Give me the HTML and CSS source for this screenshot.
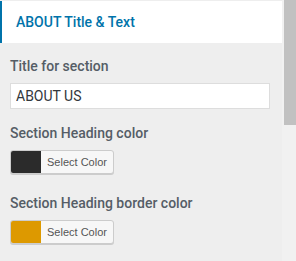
FILE: index.html
```html
<!DOCTYPE html>
<html lang="en">
<head>
  <meta charset="UTF-8">
  <title>Customizer - ABOUT Title &amp; Text</title>
  <link rel="stylesheet" href="styles.css">
</head>
<body>
  <div class="panel">
    <div class="section-title">
      <h3>ABOUT Title &amp; Text</h3>
    </div>

    <div class="controls">
      <div class="control">
        <label for="sectionTitle">Title for section</label>
        <input type="text" id="sectionTitle" value="ABOUT US">
      </div>

      <div class="control color-control">
        <label>Section Heading color</label>
        <button type="button" class="color-picker">
          <span class="swatch dark"></span>
          <span class="picker-text">Select Color</span>
        </button>
      </div>

      <div class="control color-control">
        <label>Section Heading border color</label>
        <button type="button" class="color-picker">
          <span class="swatch gold"></span>
          <span class="picker-text">Select Color</span>
        </button>
      </div>
    </div>
  </div>

  <div class="scrollbar">
    <div class="thumb"></div>
  </div>
</body>
</html>
```

FILE: styles.css
```css
body {
  margin: 0;
  font-family: Roboto, "Liberation Sans", sans-serif;
  background-color: #eeeeee;
  display: flex;
  height: 261px;
  overflow: hidden;
}
.panel {
  width: 282px;
  padding-top: 1px;
}
.section-title {
  background-color: white;
  border-left: 2px solid #0073aa;
  height: 42px;
  display: flex;
  align-items: center;
  padding-left: 14px;
}
.section-title h3 {
  margin: 0;
  font-size: 14px;
  font-weight: 500;
  color: #0073aa;
}
.controls {
  padding: 15px 12px 0 10px;
}
.control {
  margin-bottom: 16px;
}
.color-control {
  margin-bottom: 21px;
}
label {
  display: block;
  font-size: 14px;
  font-weight: 500;
  color: #555d66;
  margin-bottom: 9px;
}
input[type="text"] {
  display: block;
  width: 100%;
  height: 26px;
  box-sizing: border-box;
  border: 1px solid #dddddd;
  background-color: white;
  padding: 0 5px;
  margin: 0;
  font-family: inherit;
  font-size: 14px;
  color: #32373c;
}
.color-picker {
  display: flex;
  align-items: stretch;
  height: 24px;
  padding: 0;
  border: 1px solid #cccccc;
  border-radius: 3px;
  background-color: #f7f7f7;
  box-shadow: 0 1px 0 #cccccc;
  overflow: hidden;
  cursor: pointer;
}
.swatch {
  width: 30px;
}
.swatch.dark {
  background-color: #2b2b2b;
}
.swatch.gold {
  background-color: #dd9900;
}
.picker-text {
  display: flex;
  align-items: center;
  padding: 0 6px;
  font-family: inherit;
  font-size: 11px;
  color: #555555;
}
.scrollbar {
  width: 14px;
  background-color: #f1f1f1;
  display: flex;
  justify-content: flex-end;
}
.thumb {
  width: 12px;
  height: 125px;
  background-color: #c1c1c1;
}
```
